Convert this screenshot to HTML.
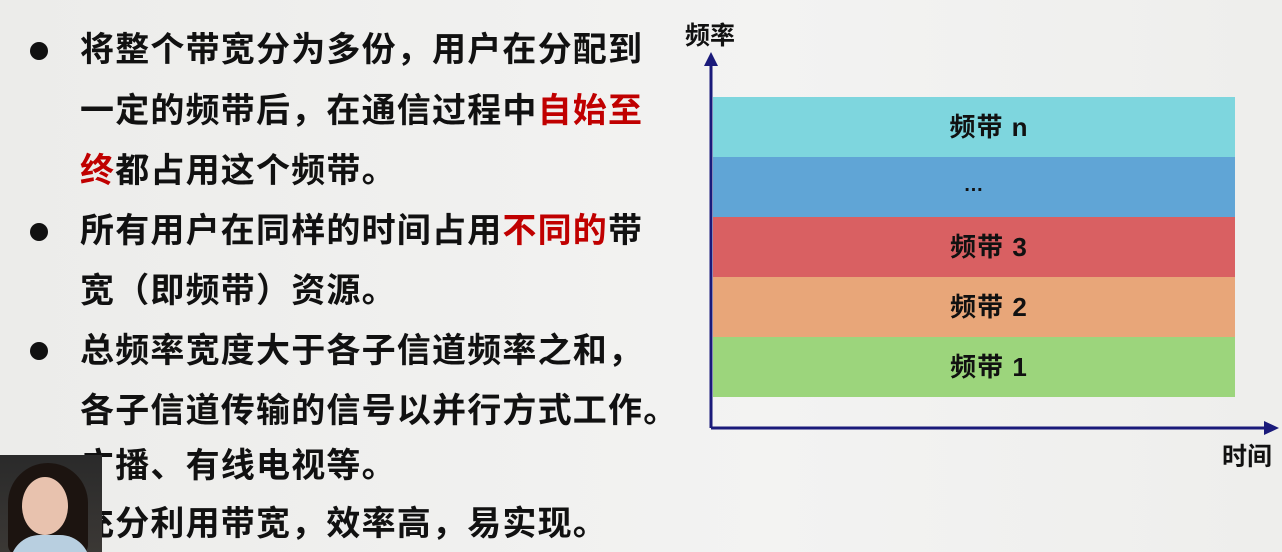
<!DOCTYPE html>
<html><head><meta charset="utf-8"><style>
body{margin:0;width:1282px;height:552px;overflow:hidden;background:linear-gradient(90deg,#ececea,#f3f3f2 60%,#eeeeec);font-family:"Liberation Sans","Noto Sans CJK SC",sans-serif;position:relative}
.t{position:absolute;left:80px;font-size:34px;letter-spacing:1.2px;font-weight:bold;color:#111;white-space:nowrap;line-height:40px}
.r{color:#c00000}
.b{position:absolute;left:30px;width:18px;height:18px;border-radius:50%;background:#111}
.band{position:absolute;left:713px;width:492px;padding-left:30px;height:60px;font-size:26px;letter-spacing:1px;font-weight:bold;color:#111;text-align:center;line-height:60px}
.cam{position:absolute;left:0;top:455px;width:102px;height:97px;overflow:hidden;background:linear-gradient(#2a2a2a,#3b3835)}
</style></head><body>
<div class="b" style="top:42px"></div>
<div class="t" style="top:30px">将整个带宽分为多份，用户在分配到</div>
<div class="t" style="top:91px">一定的频带后，在通信过程中<span class="r">自始至</span></div>
<div class="t" style="top:151px"><span class="r">终</span>都占用这个频带。</div>
<div class="b" style="top:223px"></div>
<div class="t" style="top:211px">所有用户在同样的时间占用<span class="r">不同的</span>带</div>
<div class="t" style="top:271px">宽（即频带）资源。</div>
<div class="b" style="top:342px"></div>
<div class="t" style="top:331px">总频率宽度大于各子信道频率之和，</div>
<div class="t" style="top:391px">各子信道传输的信号以并行方式工作。</div>
<div class="t" style="top:446px">广播、有线电视等。</div>
<div class="t" style="top:504px">充分利用带宽，效率高，易实现。</div>
<div class="cam">
<div style="position:absolute;left:8px;top:8px;width:80px;height:92px;border-radius:40px 40px 10px 10px;background:#1c1410"></div>
<div style="position:absolute;left:22px;top:22px;width:46px;height:58px;border-radius:50%;background:#e8c2ae"></div>
<div style="position:absolute;left:10px;top:80px;width:80px;height:30px;border-radius:30px 30px 0 0;background:#b8cfe0"></div>
</div>
<div style="position:absolute;left:685px;top:16px;font-size:25px;font-weight:bold;color:#111">频率</div>
<div style="position:absolute;left:1222px;top:437px;font-size:25px;font-weight:bold;color:#111">时间</div>
<div class="band" style="top:97px;background:#7ed6de">频带 n</div>
<div class="band" style="top:157px;background:#60a5d6;line-height:56px;font-size:20px;padding-left:0;width:522px">…</div>
<div class="band" style="top:217px;background:#d96062">频带 3</div>
<div class="band" style="top:277px;background:#e8a679">频带 2</div>
<div class="band" style="top:337px;background:#9cd57c">频带 1</div>
<svg style="position:absolute;left:0;top:0" width="1282" height="552">
<path d="M711 428V66M711 428H1268" stroke="#1a1a7a" stroke-width="3" fill="none"/>
<path d="M704 66L711 52L718 66Z M1264 421L1279 428L1264 435Z" fill="#1a1a7a"/>
</svg>
</body></html>
